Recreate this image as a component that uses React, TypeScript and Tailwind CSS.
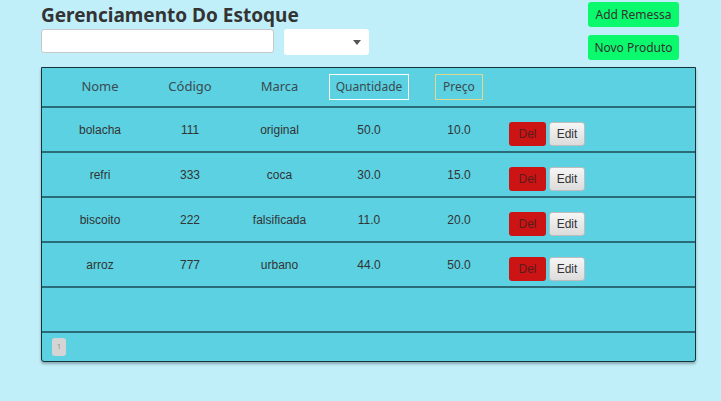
import React from "react";

const rows = [
  { nome: "bolacha", codigo: "111", marca: "original", qtd: "50.0", preco: "10.0" },
  { nome: "refri", codigo: "333", marca: "coca", qtd: "30.0", preco: "15.0" },
  { nome: "biscoito", codigo: "222", marca: "falsificada", qtd: "11.0", preco: "20.0" },
  { nome: "arroz", codigo: "777", marca: "urbano", qtd: "44.0", preco: "50.0" },
];

export default function App() {
  return (
    <div
      className="w-[721px] h-[401px] bg-[#c0effa] overflow-hidden pl-[41px]"
      style={{ fontFamily: '"Noto Sans", sans-serif' }}
    >
      <div className="flex w-[655px] h-[67px]">
        <div className="flex flex-col">
          <h1 className="text-[19px] leading-[22px] font-bold text-[#333] mt-[4px]">
            Gerenciamento Do Estoque
          </h1>
          <div className="flex mt-[3px] gap-[10px]">
            <input className="w-[233px] h-[24px] bg-white border border-[#c8c8c8] rounded-[3px]" />
            <div className="w-[85px] h-[26px] bg-white rounded-[3px] flex items-center justify-end pr-[8px]">
              <div className="w-0 h-0 border-l-[4px] border-r-[4px] border-t-[5px] border-l-transparent border-r-transparent border-t-[#555]" />
            </div>
          </div>
        </div>
        <div className="ml-auto mr-[17px] flex flex-col gap-[8px] pt-[2px]">
          <button className="w-[91px] h-[25px] bg-[#0bf96c] rounded-[3px] text-[12px] text-[#333]">
            Add Remessa
          </button>
          <button className="w-[91px] h-[25px] bg-[#0bf96c] rounded-[3px] text-[12px] text-[#333]">
            Novo Produto
          </button>
        </div>
      </div>

      <div className="w-[655px] bg-[#5bd1e2] border border-[#17343b] rounded-b-[3px] shadow-[0_2px_3px_rgba(0,0,0,0.3)]">
        <div className="flex items-center h-[40px] pl-[13px] text-[13px] text-[#3a4a50] border-b-2 border-[#2a6b78]">
          <div className="w-[90px] text-center">Nome</div>
          <div className="w-[90px] text-center">Código</div>
          <div className="w-[89px] text-center">Marca</div>
          <div className="w-[90px] flex justify-center">
            <div className="w-[80px] h-[26px] border border-white flex items-center justify-center text-[12px]">
              Quantidade
            </div>
          </div>
          <div className="w-[90px] flex justify-center">
            <div className="w-[48px] h-[26px] border border-[#e0d88e] flex items-center justify-center text-[12px]">
              Preço
            </div>
          </div>
        </div>
        {rows.map((r) => (
          <div
            key={r.codigo}
            className="flex items-center h-[45px] pl-[13px] border-b-2 border-[#2a6b78] text-[12px] text-[#333]"
            style={{ fontFamily: '"Liberation Sans", Arial, sans-serif' }}
          >
            <div className="w-[90px] text-center">{r.nome}</div>
            <div className="w-[90px] text-center">{r.codigo}</div>
            <div className="w-[89px] text-center">{r.marca}</div>
            <div className="w-[90px] text-center">{r.qtd}</div>
            <div className="w-[90px] text-center">{r.preco}</div>
            <div className="flex gap-[3px] ml-[5px] mt-[9px]">
              <button className="w-[37px] h-[24px] bg-[#cc1414] rounded-[3px] text-[12px] text-[#5a1c1c]">
                Del
              </button>
              <button className="w-[36px] h-[24px] rounded-[3px] border border-[#bdbdbd] bg-gradient-to-b from-[#f6f6f6] to-[#dcdcdc] text-[12px] text-[#333]">
                Edit
              </button>
            </div>
          </div>
        ))}
        <div className="h-[45px] border-b-2 border-[#2a6b78]" />
        <div className="h-[28px] flex items-center pl-[10px]">
          <div className="w-[14px] h-[18px] bg-[#d4d4d4] rounded-[3px] flex items-center justify-center text-[7px] text-[#888]">
            1
          </div>
        </div>
      </div>
    </div>
  );
}
